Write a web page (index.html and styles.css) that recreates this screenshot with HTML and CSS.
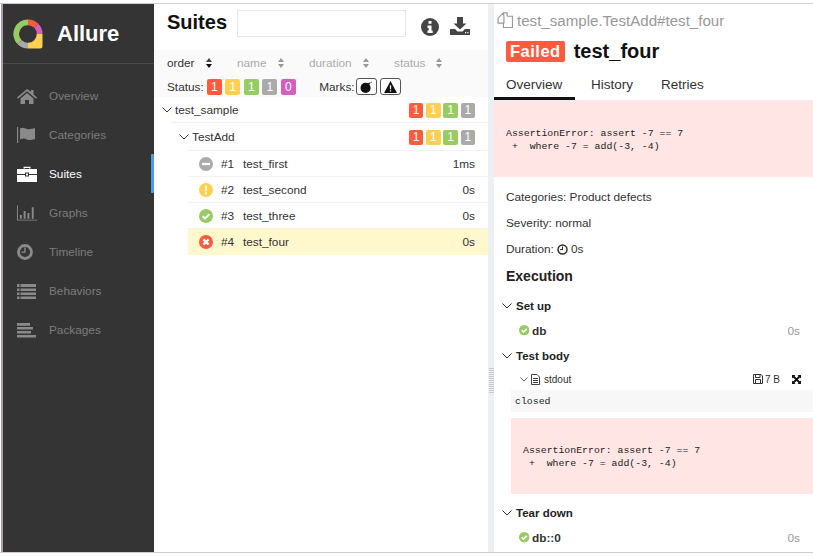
FILE: index.html
```html
<!DOCTYPE html>
<html lang="en">
<head>
<meta charset="utf-8">
<title>Allure</title>
<link rel="stylesheet" href="styles.css">
</head>
<body>
<svg class="defs" width="0" height="0">
  <symbol id="ok" viewBox="0 0 16 16"><circle cx="8" cy="8" r="8" fill="#97cc64"/><path d="M4.200 8.200l2.700 2.700 4.900-5" fill="none" stroke="#fff" stroke-width="2.300"/></symbol>
  <symbol id="chev" viewBox="0 0 10 6"><path d="M.5.500l4.500 4.500 4.500-4.500" fill="none" stroke="#333" stroke-width="1"/></symbol>
</svg>
<div class="frame">
  <aside class="sidebar">
    <div class="brand">
      <svg class="logo" width="30" height="30" viewBox="0 0 30 30">
        <g fill="none" stroke-width="5.800">
          <path d="M6.700 23.300A11.700 11.700 0 0 1 15 3.300" stroke="#97cc64"/>
          <path d="M15 3.300A11.700 11.700 0 0 1 23.300 6.700" stroke="#fd5a3e"/>
          <path d="M23.300 6.700A11.700 11.700 0 0 1 26.700 15" stroke="#d35ebe"/>
          <path d="M15 26.700A11.700 11.700 0 0 1 6.700 23.300" stroke="#aaa"/>
        </g>
        <path d="M15 29.500H27a2.500 2.500 0 0 0 2.500-2.500V15h-5.700a8.800 8.800 0 0 1-8.800 8.800z" fill="#fad04f"/>
      </svg>
      <span class="brand-name">Allure</span>
    </div>
    <nav class="nav">
      <a class="nav-item"><svg class="nav-icon" viewBox="0 0 20 16"><path d="M10 1L0 9.500l1 1.200L10 3.200l9 7.500 1-1.200-3.500-3V2h-2.500v1.800zM3.500 10.500V16h4.500v-4h4v4h4.500v-5.500L10 5z"/></svg><span>Overview</span></a>
      <a class="nav-item"><svg class="nav-icon" viewBox="0 0 20 16"><path d="M0 0h1.200v16H0zM3 1.500c3-1.500 5 0 7 .5s5 0 8-1v11c-3 1-6 1.500-8 .5s-4-1.500-7 0z"/></svg><span>Categories</span></a>
      <a class="nav-item active"><svg class="nav-icon" viewBox="0 0 20 16"><path d="M6.500 2.500V.8h7v1.700h-1.500V2H8v.5zM0 3h20v5H12V6.500H8V8H0zM0 9h8v1.500h4V9h8v7H0zM9 7.500h2V9.500H9z"/></svg><span>Suites</span></a>
      <a class="nav-item"><svg class="nav-icon" viewBox="0 0 21 16"><path d="M0 0h1v15h20v1H0zM3 10h2v4H3zM7 6h2v8H7zM11 8h2v6h-2zM15.500 2h2v12h-2z"/></svg><span>Graphs</span></a>
      <a class="nav-item"><svg class="nav-icon" viewBox="0 0 20 16"><circle cx="8" cy="8" r="6.500" fill="none" stroke="#8a8a8a" stroke-width="2.800"/><path d="M7.300 3.500h1.400v5.200H4.500V7.400h2.800z"/></svg><span>Timeline</span></a>
      <a class="nav-item"><svg class="nav-icon" viewBox="0 0 20 16"><path d="M0 1h2.500v3H0zM3.500 1H19v3H3.500zM0 5.500h2.500v2.500H0zM3.500 5.500H19v2.500H3.500zM0 9.500h2.500v2.500H0zM3.500 9.500H19v2.500H3.500zM0 13.500h2.500V16H0zM3.500 13.500H19V16H3.500z"/></svg><span>Behaviors</span></a>
      <a class="nav-item"><svg class="nav-icon" viewBox="0 0 20 16"><path d="M0 1h13v2.800H0zM0 5h16v2.500H0zM0 9h14v2.500H0zM0 13h19v2.500H0z"/></svg><span>Packages</span></a>
    </nav>
  </aside>

  <main class="suites">
    <header class="suites-head">
      <h1 class="suites-title">Suites</h1>
      <div class="search"></div>
      <svg class="tool info" viewBox="0 0 18 18"><circle cx="9" cy="9" r="9" fill="#444"/><path d="M7.500 3h3v2.800h-3zM6.500 7.500h4v5h1.200V15H6.500v-2.500h1.200V10H6.500z" fill="#fff"/></svg>
      <svg class="tool download" viewBox="0 0 20 18"><path d="M7 0h6v6.500h3.500L10 12.500 3.500 6.500H7zM0 12h5l2.500 2.500h5L15 12h5v6H0z" fill="#444"/><path d="M15 15h1.200v1.200H15zM17.300 15h1.200v1.200h-1.200z" fill="#fff"/></svg>
    </header>
    <div class="controls">
      <div class="sorts">
        <span class="sort on">order <i class="arrows"></i></span>
        <span class="sort s-name">name <i class="arrows"></i></span>
        <span class="sort s-dur">duration <i class="arrows"></i></span>
        <span class="sort s-status">status <i class="arrows"></i></span>
      </div>
      <div class="filters">
        <span class="flabel">Status:</span>
        <span class="badge red">1</span><span class="badge yellow">1</span><span class="badge green">1</span><span class="badge gray">1</span><span class="badge purple">0</span>
        <span class="flabel marks">Marks:</span>
        <span class="mark"><svg width="13" height="12" viewBox="0 0 14 13"><circle cx="6" cy="7.500" r="5.500" fill="#111"/><path d="M9 3.500l1.500-1.500" stroke="#111" stroke-width="1.500"/><circle cx="12" cy="1.500" r="1" fill="#888"/></svg></span>
        <span class="mark"><svg width="13" height="12" viewBox="0 0 14 13"><path d="M7 0l7 13H0z" fill="#111"/><path d="M6.300 4.500h1.400V9H6.300zM6.300 10h1.400v1.400H6.300z" fill="#fff"/></svg></span>
      </div>
    </div>
    <div class="tree">
      <div class="group g1"><svg class="chev"><use href="#chev"/></svg><span class="gname">test_sample</span><span class="counts"><span class="badge red">1</span><span class="badge yellow">1</span><span class="badge green">1</span><span class="badge gray">1</span></span></div>
      <div class="group g2"><svg class="chev"><use href="#chev"/></svg><span class="gname">TestAdd</span><span class="counts"><span class="badge red">1</span><span class="badge yellow">1</span><span class="badge green">1</span><span class="badge gray">1</span></span></div>
      <div class="case"><svg class="sicon" viewBox="0 0 16 16"><circle cx="8" cy="8" r="8" fill="#aaa"/><path d="M3.500 6.700h9v2.600h-9z" fill="#fff"/></svg><span class="num">#1</span><span class="cname">test_first</span><span class="time">1ms</span></div>
      <div class="case"><svg class="sicon" viewBox="0 0 16 16"><circle cx="8" cy="8" r="8" fill="#ffd050"/><path d="M6.800 3h2.400l-.4 6.500H7.200zM6.900 10.500h2.200v2.300H6.900z" fill="#fff"/></svg><span class="num">#2</span><span class="cname">test_second</span><span class="time">0s</span></div>
      <div class="case"><svg class="sicon"><use href="#ok"/></svg><span class="num">#3</span><span class="cname">test_three</span><span class="time">0s</span></div>
      <div class="case selected"><svg class="sicon" viewBox="0 0 16 16"><circle cx="8" cy="8" r="8" fill="#fd5a3e"/><path d="M5 5l6 6M11 5l-6 6" stroke="#fff" stroke-width="2.500"/></svg><span class="num">#4</span><span class="cname">test_four</span><span class="time">0s</span></div>
    </div>
  </main>

  <div class="splitter"><div class="grip"></div></div>

  <section class="detail">
    <div class="path"><svg class="copy" width="16" height="16" viewBox="0 0 15 15"><path d="M6 .8h3.500v3.200M9.500 4H14.500V14.500H6V10.500M6 .8L1 5.800v4.700H6.500V4.500z" fill="none" stroke="#999" stroke-width="1.100"/></svg><span>test_sample.TestAdd#test_four</span></div>
    <h2 class="test-title"><span class="status">Failed</span><span>test_four</span></h2>
    <div class="tabs"><span class="tab active">Overview</span><span class="tab">History</span><span class="tab">Retries</span></div>
    <pre class="message">AssertionError: assert -7 == 7
 +  where -7 = add(-3, -4)</pre>
    <p class="meta">Categories: Product defects</p>
    <p class="meta">Severity: normal</p>
    <p class="meta">Duration: <svg class="clock" width="11" height="11" viewBox="0 0 11 11"><circle cx="5.500" cy="5.500" r="4.500" fill="none" stroke="#333" stroke-width="1.500"/><path d="M5 2.500h1v3.500H3V5h2z" fill="#333"/></svg> 0s</p>
    <h3 class="exec">Execution</h3>
    <div class="stage setup"><svg class="chev"><use href="#chev"/></svg>Set up</div>
    <div class="step"><svg class="okicon"><use href="#ok"/></svg><b>db</b><span class="steptime">0s</span></div>
    <div class="stage"><svg class="chev"><use href="#chev"/></svg>Test body</div>
    <div class="attach">
      <svg class="chev"><use href="#chev"/></svg>
      <svg class="file" width="9" height="11" viewBox="0 0 9 11"><path d="M.5.500h5.500l2.500 2.500v7.500H.5zM2 4.500h5M2 6.500h5M2 8.500h5" fill="none" stroke="#444"/></svg>
      <span class="aname">stdout</span>
      <svg class="disk" width="10" height="10" viewBox="0 0 10 10"><path d="M.5.500h7.500l1.500 1.500v7.500H.5zM2.500.500v3h4.500v-3M2.500 9.500v-4h5v4" fill="none" stroke="#333"/></svg>
      <span class="asize">7 B</span>
      <svg class="expand" width="9" height="9" viewBox="0 0 9 9"><path d="M1.500 1.500l6 6M7.500 1.500l-6 6" stroke="#111" stroke-width="1.800"/><path d="M0 0h3.500L0 3.500zM9 0v3.500L5.500 0zM0 9V5.500L3.500 9zM9 9H5.500L9 5.500z" fill="#111"/></svg>
    </div>
    <pre class="stdout">closed</pre>
    <pre class="inner-msg">AssertionError: assert -7 == 7
 +  where -7 = add(-3, -4)</pre>
    <div class="stage"><svg class="chev"><use href="#chev"/></svg>Tear down</div>
    <div class="step"><svg class="okicon"><use href="#ok"/></svg><b>db::0</b><span class="steptime">0s</span></div>
  </section>
</div>
</body>
</html>
```
FILE: styles.css
```css
* { box-sizing: border-box; }
html, body { margin: 0; height: 100%; background: #fff; overflow: hidden; }
body { font-family: "Liberation Sans", Arial, sans-serif; color: #333; font-size: 11.800px; }
.defs { position: absolute; }
.frame { display: flex; height: 550px; margin-top: 3px; border-top: 1px solid #ccc; border-bottom: 1px solid #ccc; }

.sidebar { width: 153px; margin-left: 1px; flex: none; background: #343434; color: #999; border-left: 2px solid #a79cae; }
.brand { height: 60px; display: flex; align-items: center; padding-left: 10px; border-bottom: 1px solid #4a4a4a; }
.logo { flex: none; }
.brand-name { margin-left: 14px; font-size: 22px; font-weight: 700; color: #fff; }
.nav { display: flex; flex-direction: column; padding-top: 12px; }
.nav-item { height: 39px; display: flex; align-items: center; padding-left: 14px; color: #7d7d7d; border-right: 3px solid transparent; }
.nav-item span { margin-left: 12px; }
.nav-icon { width: 20px; height: 16px; fill: #8a8a8a; flex: none; }
.nav-item.active { color: #fff; border-right-color: #4a9bdc; }
.nav-item.active .nav-icon { fill: #fff; }

.suites { width: 334px; flex: none; }
.suites-head { height: 46px; display: flex; align-items: flex-start; padding-left: 13px; }
.suites-title { margin: 7px 0 0; font-size: 20px; line-height: 22px; font-weight: 700; color: #111; width: 70px; }
.search { width: 169px; height: 27px; margin-top: 6px; border: 1px solid #e6e6e6; }
.tool { flex: none; margin-top: 14px; }
.info { width: 18px; height: 18px; margin-left: 15px; }
.download { width: 20px; height: 18px; margin-left: 11px; margin-top: 13px; }

.controls { height: 47px; background: #fafafa; padding: 4px 0 0 13px; }
.sorts { display: flex; height: 17px; align-items: center; color: #aaa; }
.sort { display: flex; align-items: center; }
.sort.on { color: #333; width: 70px; }
.s-name { width: 72px; }
.s-dur { width: 85px; }
.arrows { display: inline-block; width: 7px; height: 10px; margin-left: 11px; position: relative; }
.arrows::before, .arrows::after { content: ""; position: absolute; left: 0; border-left: 3.500px solid transparent; border-right: 3.500px solid transparent; }
.arrows::before { top: 0; border-bottom: 4px solid #999; }
.arrows::after { bottom: 0; border-top: 4px solid #999; }
.on .arrows::before { border-bottom-color: #444; }
.on .arrows::after { border-top-color: #111; }
.filters { display: flex; align-items: center; margin-top: 7px; height: 17px; }
.flabel { margin-right: 3px; }
.marks { margin-left: 20px; margin-right: 1px; }
.badge { display: inline-flex; width: 15px; height: 16px; margin-right: 3.500px; justify-content: center; align-items: center; border-radius: 2px; color: #fff; font-size: 12px; }
.red { background: #fd5a3e; }
.yellow { background: #ffd050; }
.green { background: #97cc64; }
.gray { background: #aaa; }
.purple { background: #d35ebe; }
.mark { display: inline-flex; justify-content: center; align-items: center; width: 21px; height: 17px; margin-right: 3px; border: 1px solid #555; border-radius: 3px; background: #fff; }

.tree { display: flex; flex-direction: column; }
.group { height: 26px; display: flex; align-items: center; position: relative; color: #333; }
.g1 { padding-left: 8px; }
.g2 { padding-left: 25px; height: 28px; }
.g1::after { content: ""; position: absolute; left: 17px; right: 0; bottom: 0; height: 1px; background: #f2f2f2; }
.g2::after { content: ""; position: absolute; left: 34px; right: 0; bottom: 0; height: 1px; background: #f2f2f2; }
.chev { width: 10px; height: 6px; flex: none; }
.gname { margin-left: 3px; }
.counts { margin-left: auto; display: flex; margin-right: 10px; }
.counts .badge { width: 14.500px; height: 15px; margin-right: 2.800px; }
.case { height: 26px; margin-left: 34px; display: flex; align-items: center; padding-left: 11px; border-bottom: 1px solid #f2f2f2; }
.selected { background: #fff8cc; border-bottom: 0; }
.sicon { width: 14px; height: 14px; flex: none; }
.num { margin-left: 8px; width: 22px; }
.cname { flex: 1; }
.time { margin-right: 13px; }

.splitter { width: 6px; flex: none; background: #ecf0f3; display: flex; justify-content: center; padding-top: 364px; }
.grip { width: 5px; height: 26px; background: repeating-linear-gradient(#c8c8c8 0 1px, #ecf0f3 1px 2px); }

.detail { flex: 1; min-width: 0; overflow: hidden; }
.path { height: 30px; display: flex; align-items: center; padding: 2px 0 0 3px; font-size: 15.100px; color: #999; }
.copy { margin-right: 4px; flex: none; }
.test-title { margin: 0; height: 34px; display: flex; align-items: center; padding-left: 12px; font-size: 20px; font-weight: 700; color: #111; }
.status { display: inline-block; background: #fd5a3e; color: #fff; font-size: 16.500px; line-height: 21px; padding: 0 4px; border-radius: 2px; margin-right: 9px; letter-spacing: .5px; }
.tabs { height: 33px; display: flex; border-bottom: 1px solid #eee; font-size: 13.500px; padding-top: 9px; }
.tab { margin-right: 4px; padding: 0 12px; color: #333; }
.tab.active { border-bottom: 3px solid #111; width: 81px; }
.message, .inner-msg, .stdout { font-family: "Liberation Mono", "Courier New", monospace; font-size: 9.850px; color: #222; margin: 0; }
.message { height: 76px; background: #ffe5e3; padding: 26px 12px 0; line-height: 13px; margin-bottom: 7px; }
.meta { margin: 0; height: 26px; display: flex; align-items: center; padding-left: 12px; }
.clock { margin: 0 3px; }
.exec { margin: 0; height: 28px; display: flex; align-items: center; padding-left: 12px; font-size: 14px; font-weight: 700; color: #222; }
.stage { height: 25px; display: flex; align-items: center; padding-left: 8px; font-weight: 700; font-size: 11.500px; color: #222; }
.setup { margin-top: 3px; }
.stage .chev { margin-right: 4px; }
.step { height: 25px; display: flex; align-items: center; padding: 0 13px 0 25px; }
.okicon { width: 10.500px; height: 10.500px; margin-right: 2.500px; }
.steptime { margin-left: auto; color: #999; }
.attach { height: 22px; display: flex; align-items: center; padding: 0 12px 0 26px; font-size: 10px; }
.attach .chev { width: 8px; height: 5px; margin-right: 3px; }
.aname { margin-left: 4px; }
.disk { margin-left: auto; margin-right: 2px; }
.expand { margin-left: 12px; }
.stdout { height: 22px; margin-left: 17px; background: #f7f7f7; padding: 6px 4px; line-height: 12px; }
.inner-msg { height: 76px; margin: 6px 0 6px 17px; background: #ffe5e3; padding: 26px 12px 0; line-height: 13px; }
```
